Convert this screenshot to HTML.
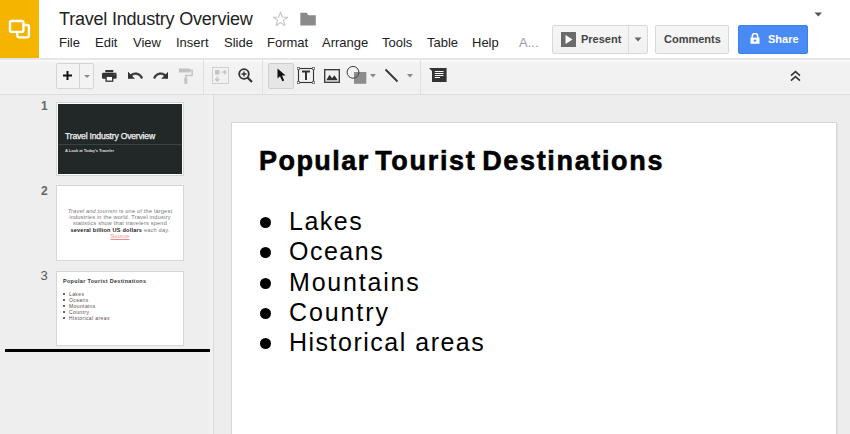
<!DOCTYPE html>
<html><head><meta charset="utf-8">
<style>
*{margin:0;padding:0;box-sizing:border-box}
html,body{width:850px;height:434px;overflow:hidden;background:#fff;font-family:"Liberation Sans",sans-serif}
.abs{position:absolute}
svg{display:block}
#logo{left:0;top:0;width:39px;height:58px;background:#f4b400}
#title{left:59px;top:8px;font-size:18px;letter-spacing:-0.2px;line-height:22px;color:#222;white-space:nowrap}
.menu{top:35px;font-size:13px;line-height:16px;color:#222;white-space:nowrap}
#hdrline{left:0;top:58px;width:850px;height:2px;background:#e6e6e6}
#toolbar{left:0;top:60px;width:850px;height:34px;background:linear-gradient(#fcfcfc 0,#fcfcfc 1px,#f3f3f3 2px,#f0f0f0 31px,#f3f3f3 33px)}
#tbline{left:0;top:94px;width:850px;height:1px;background:#dcdcdc}
#film{left:0;top:95px;width:213px;height:340px;background:linear-gradient(90deg,#eeeeee 0,#eeeeee 209px,#f1f1f1 209px)}
#filmline{left:213px;top:95px;width:1px;height:340px;background:#d9d9d9}
#canvas{left:214px;top:95px;width:636px;height:340px;background:#ededed}
#slide{left:231px;top:122px;width:606px;height:330px;background:#fff;border:1px solid #d6d6d6;box-shadow:1px 0 0 #e2e2e2}
.btn{border:1px solid #d9d9d9;border-radius:2px;background:linear-gradient(#f6f6f6,#f1f1f1);font-size:12px;font-weight:bold;color:#444;white-space:nowrap}
.num{font-size:12px;font-weight:bold;color:#666;line-height:14px}
.st{color:#000;white-space:nowrap;font-family:"Liberation Sans",sans-serif;transform-origin:0 0}
.sep{top:60px;width:1px;height:34px;background:#e0e0e0}
.li{font-size:25px;line-height:30px}
.tt{white-space:nowrap;transform-origin:0 0}
</style></head><body>
<div class="abs" id="logo">
<svg width="39" height="58" viewBox="0 0 39 58"><rect x="10" y="21" width="13.4" height="10.9" rx="1.6" fill="none" stroke="#fff" stroke-width="2.4"/><path d="M23.4 25 H27.3 a1.6 1.6 0 0 1 1.6 1.6 V35.8 a1.6 1.6 0 0 1 -1.6 1.6 H18.9 a1.6 1.6 0 0 1 -1.6 -1.6 V31.9" fill="none" stroke="#fff" stroke-width="2.4"/></svg>
</div>
<div class="abs" id="title">Travel Industry Overview</div>
<!-- star -->
<svg class="abs" style="left:272px;top:11px" width="17" height="16" viewBox="0 0 17 16"><path d="M8.5 1.2 L10.4 6 L15.6 6.2 L11.5 9.4 L12.9 14.5 L8.5 11.6 L4.1 14.5 L5.5 9.4 L1.4 6.2 L6.6 6 Z" fill="none" stroke="#c4c4c4" stroke-width="1.1" stroke-linejoin="round"/></svg>
<!-- folder -->
<svg class="abs" style="left:300px;top:12px" width="17" height="14" viewBox="0 0 17 14"><path d="M0.3 0.8 H6.8 L8.3 3.2 H15.8 V13.6 H0.3 Z" fill="#8a8a8a"/></svg>

<div class="abs menu" style="left:59px">File</div>
<div class="abs menu" style="left:95px">Edit</div>
<div class="abs menu" style="left:133px">View</div>
<div class="abs menu" style="left:176px">Insert</div>
<div class="abs menu" style="left:224px">Slide</div>
<div class="abs menu" style="left:267px">Format</div>
<div class="abs menu" style="left:322px">Arrange</div>
<div class="abs menu" style="left:382px">Tools</div>
<div class="abs menu" style="left:427px">Table</div>
<div class="abs menu" style="left:472px">Help</div>
<div class="abs menu" style="left:519px;color:#9a9a9a">A...</div>

<!-- top-right arrow -->
<svg class="abs" style="left:814px;top:12px" width="9" height="5" viewBox="0 0 9 5"><path d="M0.5 0.5 H8 L4.25 4.5 Z" fill="#555"/></svg>

<!-- Present -->
<div class="abs btn" style="left:552px;top:25px;width:96px;height:29px"></div>
<div class="abs" style="left:628px;top:26px;width:1px;height:27px;background:#dedede"></div>
<svg class="abs" style="left:561px;top:32px" width="15" height="15" viewBox="0 0 15 15"><rect x="0" y="0" width="15" height="15" fill="#6b6b6b"/><path d="M4.5 3 L11.5 7.5 L4.5 12 Z" fill="#fff"/></svg>
<div class="abs tt" style="left:581px;top:32px;font-size:11px;line-height:14px;font-weight:bold;color:#444">Present</div>
<svg class="abs" style="left:634px;top:37px" width="8" height="5" viewBox="0 0 8 5"><path d="M0.5 0.5 H7.5 L4 4.5 Z" fill="#666"/></svg>
<!-- Comments -->
<div class="abs btn" style="left:655px;top:25px;width:74px;height:29px"></div>
<div class="abs tt" style="left:664px;top:32px;font-size:11px;line-height:14px;font-weight:bold;color:#444">Comments</div>
<!-- Share -->
<div class="abs" style="left:738px;top:25px;width:70px;height:29px;background:#4a8af4;border:1px solid #3c7ff0;border-radius:2px"></div>
<svg class="abs" style="left:750px;top:33px" width="10" height="11" viewBox="0 0 10 11"><path d="M2.3 5 V3.2 a2.7 2.7 0 0 1 5.4 0 V5" fill="none" stroke="#fff" stroke-width="1.6"/><rect x="0.5" y="4.6" width="9" height="6.2" fill="#fff"/><circle cx="5" cy="7.6" r="1.2" fill="#4a8af4"/></svg>
<div class="abs tt" style="left:768px;top:32px;font-size:11px;line-height:14px;font-weight:bold;color:#fff">Share</div>

<div class="abs" id="hdrline"></div>
<div class="abs" id="toolbar"></div>
<div class="abs" id="tbline"></div>

<!-- toolbar items -->
<div class="abs" style="left:56px;top:63px;width:38px;height:26px;border:1px solid #d5d5d5;border-radius:2px;background:#f3f3f3"></div>
<div class="abs" style="left:79px;top:64px;width:1px;height:24px;background:#d5d5d5"></div>
<svg class="abs" style="left:63px;top:71px" width="9" height="9" viewBox="0 0 9 9"><path d="M4.5 0 V9 M0 4.5 H9" stroke="#111" stroke-width="2"/></svg>
<svg class="abs" style="left:84px;top:75px" width="6" height="3" viewBox="0 0 6 3"><path d="M0 0 H6 L3 3 Z" fill="#888"/></svg>
<!-- print -->
<svg class="abs" style="left:102px;top:70px" width="15" height="12" viewBox="0 0 15 12"><rect x="3.3" y="0" width="8" height="2.2" fill="#333"/><rect x="0" y="2.8" width="14.6" height="5.9" rx="1.3" fill="#333"/><rect x="4.1" y="6.3" width="6.6" height="4.9" fill="#fff" stroke="#333" stroke-width="1.3"/><rect x="12" y="4" width="1" height="1" fill="#888"/></svg>
<!-- undo -->
<svg class="abs" style="left:127.5px;top:72.2px" width="15.2" height="6.8" viewBox="2 7 21.1 9.4"><path d="M12.5 8c-2.65 0-5.05.99-6.9 2.6L2 7v9h9l-3.62-3.62c1.39-1.160 3.16-1.88 5.12-1.88 3.54 0 6.55 2.31 7.6 5.5l2.37-.78C21.08 11.03 17.15 8 12.5 8z" fill="#333" stroke="#333" stroke-width="0.7"/></svg>
<!-- redo -->
<svg class="abs" style="left:153px;top:72.2px" width="15.2" height="6.8" viewBox="0.9 7 21.1 9.4"><path d="M18.4 10.6C16.55 8.99 14.15 8 11.5 8c-4.65 0-8.58 3.03-9.96 7.22L3.9 16c1.05-3.19 4.05-5.5 7.6-5.5 1.95 0 3.73.72 5.12 1.880L13 16h9V7l-3.6 3.6z" fill="#333" stroke="#333" stroke-width="0.7"/></svg>
<!-- paint format -->
<svg class="abs" style="left:179px;top:68px" width="14" height="16" viewBox="0 0 14 16"><rect x="0" y="0.5" width="11.5" height="4" fill="#c2c2c2"/><path d="M11.5 2.5 H13.2 V7.5 H6.8 V10" fill="none" stroke="#c2c2c2" stroke-width="1.4"/><rect x="5.3" y="9.5" width="3" height="6.5" rx="1" fill="#c2c2c2"/></svg>
<div class="abs sep" style="left:203px"></div>
<!-- layout -->
<svg class="abs" style="left:212px;top:67px" width="17" height="17" viewBox="0 0 17 17"><rect x="0.5" y="0.5" width="16" height="16" fill="none" stroke="#cfcfcf"/><rect x="3" y="3" width="4.5" height="4.5" fill="#c6c6c6"/><path d="M9.5 5.2 H14 M12 3.2 L14 5.2 L12 7.2 M5.2 9.5 V14 M3.2 12 L5.2 14 L7.2 12" fill="none" stroke="#c6c6c6" stroke-width="1.3"/></svg>
<!-- zoom -->
<svg class="abs" style="left:238px;top:68px" width="15" height="15" viewBox="0 0 15 15"><circle cx="6" cy="6" r="4.8" fill="none" stroke="#333" stroke-width="1.8"/><path d="M6 3.5 V8.5 M3.5 6 H8.5" stroke="#333" stroke-width="1.4"/><path d="M9.5 9.5 L14 14" stroke="#333" stroke-width="2.2"/></svg>
<div class="abs sep" style="left:262px"></div>
<!-- select -->
<div class="abs" style="left:268px;top:63px;width:26px;height:26px;border:1px solid #cfcfcf;border-radius:2px;background:#e6e6e6"></div>
<svg class="abs" style="left:276px;top:68px" width="11" height="14" viewBox="0 0 11 14"><path d="M1.5 0.5 V10.5 L4 8.3 L6.3 13.3 L8.2 12.4 L6 7.5 H9.6 Z" fill="#111"/></svg>
<!-- textbox -->
<svg class="abs" style="left:297px;top:67px" width="18" height="17" viewBox="0 0 18 17"><rect x="1.5" y="1.5" width="15" height="14" fill="none" stroke="#333" stroke-width="1.1"/><circle cx="1.5" cy="1.5" r="1.3" fill="#fff" stroke="#333" stroke-width="0.9"/><circle cx="16.5" cy="1.5" r="1.3" fill="#fff" stroke="#333" stroke-width="0.9"/><circle cx="1.5" cy="15.5" r="1.3" fill="#fff" stroke="#333" stroke-width="0.9"/><circle cx="16.5" cy="15.5" r="1.3" fill="#fff" stroke="#333" stroke-width="0.9"/><path d="M5 4.6 H13 M9 4.6 V13" stroke="#333" stroke-width="2"/></svg>
<!-- image -->
<svg class="abs" style="left:324px;top:69px" width="16" height="14" viewBox="0 0 16 14"><rect x="0.7" y="0.7" width="14.6" height="12.6" fill="none" stroke="#333" stroke-width="1.3"/><path d="M2.3 11.3 L5.2 6.2 Q5.6 5.6 6 6.2 L8 9.2 L10 6.8 Q10.4 6.3 10.8 6.8 L13.7 11.3 Z" fill="#333"/></svg>
<!-- shapes -->
<svg class="abs" style="left:346px;top:66px" width="21" height="18" viewBox="0 0 21 18"><rect x="8" y="6" width="12.3" height="11.8" fill="#8c8c8c"/><circle cx="7" cy="6.3" r="5.9" fill="none" stroke="#3a3a3a" stroke-width="1"/></svg>
<svg class="abs" style="left:370px;top:74px" width="6" height="4" viewBox="0 0 6 4"><path d="M0 0 H6 L3 3.5 Z" fill="#888"/></svg>
<!-- line -->
<svg class="abs" style="left:384px;top:68px" width="15" height="15" viewBox="0 0 15 15"><path d="M1.5 1.5 L13.5 13.5" stroke="#333" stroke-width="1.8"/></svg>
<svg class="abs" style="left:407px;top:74px" width="6" height="4" viewBox="0 0 6 4"><path d="M0 0 H6 L3 3.5 Z" fill="#888"/></svg>
<div class="abs sep" style="left:420px"></div>
<!-- comment -->
<svg class="abs" style="left:429px;top:68px" width="18" height="14" viewBox="0 0 18 14"><path d="M0 0 H17.6 V14 H3 V3 Z" fill="#333"/><path d="M5.8 3.5 H14.5 M5.8 5.5 H14.5 M5.8 7.5 H14.5 M5.8 9.5 H11" stroke="#fff" stroke-width="1"/></svg>
<!-- collapse -->
<svg class="abs" style="left:790px;top:70px" width="11" height="12" viewBox="0 0 11 12"><path d="M1 5.6 L5.5 1.6 L10 5.6 M1 10.6 L5.5 6.6 L10 10.6" fill="none" stroke="#333" stroke-width="1.5"/></svg>

<div class="abs" id="film"></div>
<div class="abs" id="filmline"></div>
<div class="abs" id="canvas"></div>
<div class="abs" id="slide"></div>
<div class="abs st" id="stitle" style="left:259px;top:145px;-webkit-text-stroke:0.6px #000;letter-spacing:1.45px;word-spacing:-3.5px;font-weight:bold;font-size:27px;line-height:32px">Popular <span style="letter-spacing:1.7px">Tourist </span><span style="letter-spacing:1.65px">Destinations</span></div>
<div class="abs st li" style="left:289px;letter-spacing:1.5px;top:206.00px">Lakes</div>
<div class="abs" style="left:260px;top:217.00px;width:11px;height:11px;border-radius:50%;background:#000"></div>
<div class="abs st li" style="left:289px;letter-spacing:1.5px;top:236.25px">Oceans</div>
<div class="abs" style="left:260px;top:247.25px;width:11px;height:11px;border-radius:50%;background:#000"></div>
<div class="abs st li" style="left:289px;letter-spacing:1.8px;top:266.50px">Mountains</div>
<div class="abs" style="left:260px;top:277.50px;width:11px;height:11px;border-radius:50%;background:#000"></div>
<div class="abs st li" style="left:289px;letter-spacing:1.9px;top:296.75px">Country</div>
<div class="abs" style="left:260px;top:307.75px;width:11px;height:11px;border-radius:50%;background:#000"></div>
<div class="abs st li" style="left:289px;letter-spacing:1.5px;top:327.00px">Historical areas</div>
<div class="abs" style="left:260px;top:338.00px;width:11px;height:11px;border-radius:50%;background:#000"></div>


<div class="abs" style="left:56px;top:102px;width:128px;height:74px;border:1px solid #d6d6d6;background:#fff;padding:1px"><div style="width:100%;height:100%;background:#222728"></div></div>
<div class="abs tt" style="left:65px;top:130.8px;font-size:8.6px;line-height:10px;color:#f4f4f4;letter-spacing:-0.2px;-webkit-text-stroke:0.25px #f4f4f4">Travel Industry Overview</div>
<div class="abs" style="left:58px;top:144px;width:124px;height:1px;background:#33473f"></div>
<div class="abs tt" style="left:65px;top:148px;font-size:4.1px;line-height:5px;color:#ddd;font-weight:bold;letter-spacing:-0.1px">A Look at Today's Traveler</div>
<div class="abs" style="left:56px;top:185px;width:128px;height:76px;border:1px solid #d6d6d6;background:#fff"></div>
<div class="abs tt" style="left:58px;top:207.5px;width:124px;text-align:center;font-size:5.6px;line-height:6.35px;color:#777;letter-spacing:0.2px"><i>Travel and tourism</i> is one of the largest<br>industries in the world. Travel industry<br>statistics show that travelers spend<br><b style="color:#222">several billion US dollars</b> each day.<br><u style="color:#e88">Source</u></div>
<div class="abs" style="left:56px;top:271px;width:128px;height:75px;border:1px solid #d6d6d6;background:#fff"></div>
<div class="abs tt" style="left:63px;top:277.7px;font-size:5.4px;line-height:6px;color:#333;font-weight:bold;letter-spacing:0.36px">Popular Tourist Destinations</div>
<div class="abs" style="left:63px;top:292.80px;width:2px;height:2px;background:#333;border-radius:1px"></div><div class="abs" style="left:63px;top:298.85px;width:2px;height:2px;background:#333;border-radius:1px"></div><div class="abs" style="left:63px;top:304.90px;width:2px;height:2px;background:#333;border-radius:1px"></div><div class="abs" style="left:63px;top:310.95px;width:2px;height:2px;background:#333;border-radius:1px"></div><div class="abs" style="left:63px;top:317.00px;width:2px;height:2px;background:#333;border-radius:1px"></div><div class="abs tt" style="left:69px;top:291px;font-size:5px;line-height:6.05px;color:#5a4a4a;letter-spacing:0.4px">Lakes<br>Oceans<br>Mountains<br>Country<br>Historical areas</div>
<div class="abs" style="left:5px;top:349px;width:205px;height:3px;background:#000"></div>
<div class="abs num" style="left:41px;top:99px">1</div>
<div class="abs num" style="left:41px;top:184px">2</div>
<div class="abs num" style="left:40.5px;top:269px;font-weight:normal;font-size:13px;color:#555">3</div>
</body></html>
